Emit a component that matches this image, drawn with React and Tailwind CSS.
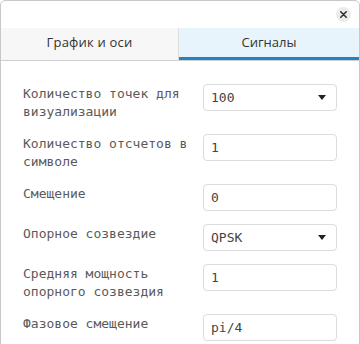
import React from "react";

const mono = { fontFamily: '"DejaVu Sans Mono", "Liberation Mono", monospace' };

function Caret() {
  return (
    <svg width="8" height="5" viewBox="0 0 8 5" className="shrink-0">
      <path d="M0 0 L8 0 L4 5 Z" fill="#222" />
    </svg>
  );
}

function Field({ value, select }) {
  return (
    <div className="w-[134px] h-[27px] border border-[#dcdcdc] rounded-[4px] bg-white flex items-center justify-between pl-[7px] pr-[10px] text-[13px] text-[#444]">
      <span>{value}</span>
      {select && <Caret />}
    </div>
  );
}

function Row({ label, value, select }) {
  return (
    <div className="flex items-start gap-[10px]">
      <div className="w-[170px] text-[13px] leading-[18px] text-[#5a5a5a] pt-[1px]">{label}</div>
      <Field value={value} select={select} />
    </div>
  );
}

export default function App() {
  return (
    <div className="w-[360px] h-[344px] overflow-hidden bg-white" style={mono}>
      <div className="w-[360px] h-[400px] border border-[#c8c8c8] rounded-t-[5px] flex flex-col">
        <div className="h-[27px] flex items-center justify-end pr-[8px]">
          <div className="w-[15px] h-[15px] rounded-full bg-[#ececec] flex items-center justify-center mt-[-1px]">
            <svg width="7" height="7" viewBox="0 0 7 7">
              <path d="M0.8 0.8 L6.2 6.2 M6.2 0.8 L0.8 6.2" stroke="#333" strokeWidth="1.6" strokeLinecap="round" />
            </svg>
          </div>
        </div>
        <div
          className="h-[33px] flex border-b border-[#d0d0d0] text-[13px] text-[#333]"
          style={{ fontFamily: '"Open Sans", "Noto Sans", sans-serif' }}
        >
          <div className="w-[178px] bg-[#f7f7f7] border-r border-[#dedede] flex items-center justify-center pb-[2px] tracking-[0.2px]">
            График и оси
          </div>
          <div className="flex-1 bg-[#e8f4fc] border-b-[3px] border-[#2184c1] flex items-center justify-center pt-[1px]">
            Сигналы
          </div>
        </div>
        <div className="flex flex-col gap-[13px] pl-[22px] pt-[23px]">
          <Row label="Количество точек для визуализации" value="100" select />
          <Row label="Количество отсчетов в символе" value="1" />
          <Row label="Смещение" value="0" />
          <Row label="Опорное созвездие" value="QPSK" select />
          <Row label="Средняя мощность опорного созвездия" value="1" />
          <Row label="Фазовое смещение" value="pi/4" />
        </div>
      </div>
    </div>
  );
}
